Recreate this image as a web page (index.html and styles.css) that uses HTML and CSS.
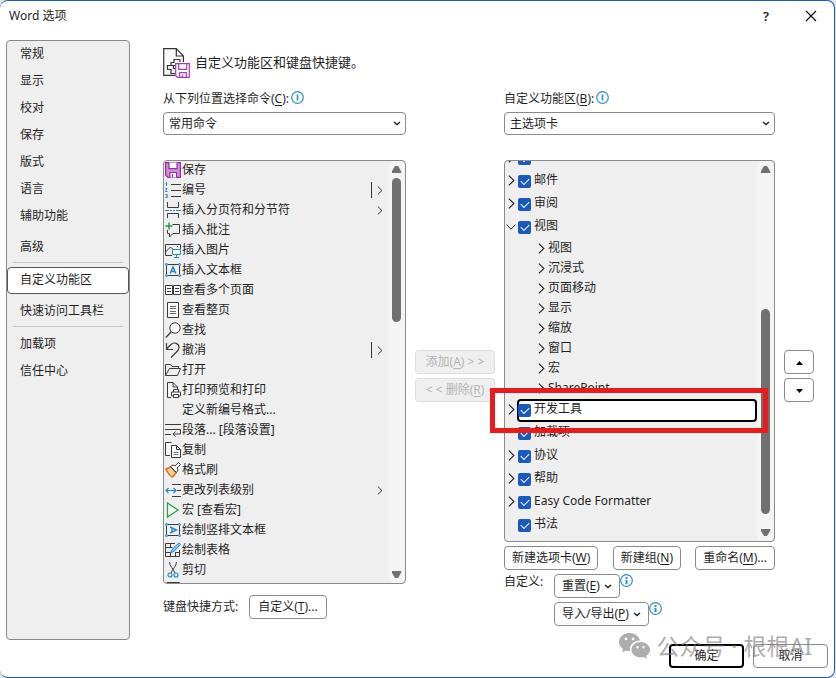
FILE: index.html
```html
<!DOCTYPE html>
<html lang="zh-CN">
<head>
<meta charset="utf-8">
<title>Word 选项</title>
<link rel="stylesheet" href="styles.css">
</head>
<body>
<svg class="defs" aria-hidden="true">
  <symbol id="right" viewBox="0 0 6 10"><path d="M.6.600 5.200 5 .6 9.400"/></symbol>
  <symbol id="down" viewBox="0 0 8 5"><path d="M1 1l3 2.600L7 1"/></symbol>
  <symbol id="info" viewBox="0 0 13 13"><circle cx="6.500" cy="6.500" r="5.800"/><path d="M6.500 3v2M6.500 6v4" stroke-width="2"/></symbol>
  <symbol id="info-bar" viewBox="0 0 13 13"><circle cx="6.500" cy="6.500" r="5.800"/><path d="M6.500 3.500v6" stroke-width="1.600"/></symbol>
</svg>
<div class="dialog">
  <header class="titlebar">
    <h1 class="title">Word 选项</h1>
    <button class="title-btn help" aria-label="帮助">?</button>
    <button class="title-btn" aria-label="关闭"><svg width="12" height="12" viewBox="0 0 12 12"><path d="M1 1l10 10M11 1L1 11" fill="none" stroke="#111" stroke-width="1.200"/></svg></button>
  </header>

  <div class="main">
    <nav class="nav">
      <a href="#">常规</a>
      <a href="#">显示</a>
      <a href="#">校对</a>
      <a href="#">保存</a>
      <a href="#">版式</a>
      <a href="#">语言</a>
      <a href="#">辅助功能</a>
      <a href="#" class="spaced">高级</a>
      <hr>
      <a href="#" class="selected">自定义功能区</a>
      <a href="#" class="spaced">快速访问工具栏</a>
      <hr>
      <a href="#">加载项</a>
      <a href="#">信任中心</a>
    </nav>

    <main class="content">
      <div class="heading">
        <svg width="28" height="30" viewBox="0 0 28 30" fill="none" stroke="#333" stroke-width="1.200"><path d="M12 27.400H.7V.7h12.600L20.400 8v6M13.300.7V8h7.100" fill="#fafafa"/><path d="M17 11.500h-6v3h-3v3M10 17.500H4.500v4H8v4h4M12 17.500h-1.500v3H12M17 11.500V14"/><path d="M12.700 15.700h13.600v13.600h-12l-1.600-1.600z" stroke="#a63bb5" fill="#fff"/><path d="M15.700 15.700v5.600h8v-5.600M16.700 29.300v-4.600h6.600v4.600M19.500 29v-2.500" stroke="#a63bb5"/></svg>
        <h2>自定义功能区和键盘快捷键。</h2>
      </div>

      <div class="columns">
        <section class="col col-commands">
          <div class="label"><label for="source">从下列位置选择命令(<u>C</u>):</label><svg class="info"><use href="#info-bar"/></svg></div>
          <div class="select"><select id="source"><option>常用命令</option></select><svg class="caret"><use href="#down"/></svg></div>
          <div class="listbox">
            <ul class="commands">
              <li><svg class="ico"><path d="M.6.600h14.800v14.800H3L.6 13z" fill="#d48bdb" stroke="#922fa3" stroke-width="1.200"/><path d="M4 .6v6h8v-6M5 15.400V10.500h6.500v4.900" fill="#fff" stroke="#922fa3" stroke-width="1.200"/><path d="M7.500 12v3.400" stroke="#922fa3"/></svg><span>保存</span></li>
              <li><svg class="ico"><path d="M6 2.500h10M6 8.500h10M6 14.500h10"/><path class="blue" d="M.5 1.500h1M1.500 0v4M.3 6.500h1.900M1.800 6.500L.5 9.500h2M.3 12.500h1.900v3H.3M1 14h1"/></svg><span>编号</span><i class="bar"></i><svg class="more"><use href="#right"/></svg></li>
              <li><svg class="ico"><path d="M2.500 0v5.500h11V0M2.500 16v-4.500h11V16"/><path class="blue" d="M0 8.500h4M5 8.500h2M8 8.500h2M11 8.500h5"/></svg><span>插入分页符和分节符</span><svg class="more"><use href="#right"/></svg></li>
              <li><svg class="ico"><path d="M7.500 2.500h7v9H8L4.500 15v-3.500h-2V8"/><path d="M4 .5v7M.5 4h7" stroke="#23944a" stroke-width="1.400"/></svg><span>插入批注</span></li>
              <li><svg class="ico"><path d="M7 13.500H.5v-11h15V7M.5 10l5-5 3 3M12 4.500h1"/><path class="blue" d="M7.500 7.500h8v5h-8zM11.500 12.500v3M9 15.500h5" fill="#fff"/></svg><span>插入图片</span></li>
              <li><svg class="ico"><path d="M3 2.500h10M3 13.500h10M1.500 4v8M14.500 4v8"/><path class="blue" d="M.7 1.700h1.600v1.600H.7zM13.700 1.700h1.600v1.600h-1.600zM.7 12.700h1.600v1.600H.7zM13.700 12.700h1.600v1.600h-1.600z"/><path class="blue" d="M5.200 11.500L8 5l2.800 6.500M6 9.500h4" stroke-width="1.500"/></svg><span>插入文本框</span></li>
              <li><svg class="ico"><path d="M.5 3.500h7v9h-7zM8.500 3.500h7v9h-7z" fill="#fff"/><path d="M2 6.500h4M2 9.500h4M10 6.500h4M10 9.500h4"/></svg><span>查看多个页面</span></li>
              <li><svg class="ico"><path d="M2.500.5h11v15h-11z" fill="#fafafa"/><path d="M5 4.500h6M5 6.500h6M5 9.500h6M5 11.500h6" stroke="#666"/></svg><span>查看整页</span></li>
              <li><svg class="ico"><circle cx="10" cy="6" r="5.200" fill="#fafafa"/><path d="M6.300 9.700L.8 15.500" stroke-width="1.300"/></svg><span>查找</span></li>
              <li><svg class="ico"><path d="M1.500 1v6.500H8M1.500 7L6 2.500c3-3 8-1 8 3 0 2-1 3-2 4L6 15.500" stroke-width="1.200"/></svg><span>撤消</span><i class="bar"></i><svg class="more"><use href="#right"/></svg></li>
              <li><svg class="ico"><path d="M.5 13.500v-11h5l1.500 2h6.500v2M.5 13.500l4-7h11l-3 7z"/></svg><span>打开</span></li>
              <li><svg class="ico"><path d="M6 15.500H2.500V.5H8L12.500 5v2M8 .5V5h4.500" fill="#fafafa"/><path d="M8.500 10V7.500h5V10M8.500 14h-2v-4h9v4h-2M8.500 12.500h5v3h-5z" fill="#fff"/></svg><span>打印预览和打印</span></li>
              <li><svg class="ico"></svg><span>定义新编号格式...</span></li>
              <li><svg class="ico"><path d="M0 2.500h16M0 7.500h15.500v4.500H8M10.500 9.500L8 12l2.500 2.500M0 12.500h6"/></svg><span>段落... [段落设置]</span></li>
              <li><svg class="ico"><path d="M5 13.500H.5V.5h6M6.500 3.500h5l4 4v8h-9zM11.500 3.500v4h4" fill="#fafafa"/><path d="M8.500 10.500h5M8.500 12.500h5" stroke="#777"/></svg><span>复制</span></li>
              <li><svg class="ico"><path d="M1 7l5-2 5 6-3.500 4C5 14 3 11.500 1 7z" fill="#f9d3ae" stroke="#e06c10" stroke-width="1.500"/><path d="M5.500 4.500L8 3l2 1 3.500-3.500 2 2L12 6l1 2-1.500 2.500z" fill="#fff"/></svg><span>格式刷</span></li>
              <li><svg class="ico"><path d="M7 2.500h9M12 8.500h4M7 14.500h9"/><path class="blue" d="M.8 8.500h10M3.500 6L1 8.500 3.500 11M8.500 6L11 8.500 8.500 11" stroke-width="1.200"/></svg><span>更改列表级别</span><svg class="more"><use href="#right"/></svg></li>
              <li><svg class="ico"><path d="M2.500 1v14L13 8z" stroke="#2f9a50" stroke-width="1.300" fill="#f5faf5"/></svg><span>宏 [查看宏]</span></li>
              <li><svg class="ico"><path d="M3 2.500h10M3 13.500h10M1.500 4v8M14.500 4v8"/><path class="blue" d="M.7 1.700h1.600v1.600H.7zM13.700 1.700h1.600v1.600h-1.600zM.7 12.700h1.600v1.600H.7zM13.700 12.700h1.600v1.600h-1.600z"/><path class="blue" d="M5 5l6.500 3L5 11M7 6v4" stroke-width="1.400"/></svg><span>绘制竖排文本框</span></li>
              <li><svg class="ico"><path d="M10 1.500H.5v13h14V8M.5 5.500h7M.5 10.500h5M5.500 1.500v4M5.500 10.500v4M10.500 10v4.500M10 10.500h4"/><path class="blue" d="M6 10.500l1-3L14 .8l1.500 1.500L9 9.500z" fill="#8cc6ee"/></svg><span>绘制表格</span></li>
              <li><svg class="ico"><path d="M4.500 0c0 4 4 7 5.500 11M11.500 0c0 4-4 7-5.500 11"/><circle class="blue" cx="5" cy="13" r="2" stroke-width="1.200"/><circle class="blue" cx="11" cy="13" r="2" stroke-width="1.200"/></svg><span>剪切</span></li>
              <li><svg class="ico"><path d="M2 .5h12.500v12H2z"/></svg></li>
            </ul>
            <div class="scroll"><i class="tri up"></i><div class="track"><i class="thumb thumb-commands"></i></div><i class="tri dn"></i></div>
          </div>
          <div class="shortcut"><span>键盘快捷方式:</span><button class="btn">自定义(<u>T</u>)...</button></div>
        </section>

        <div class="col middle">
          <button class="btn" disabled>添加(<u>A</u>) &gt; &gt;</button>
          <button class="btn" disabled>&lt; &lt; 删除(<u>R</u>)</button>
        </div>

        <section class="col">
          <div class="label"><label for="target">自定义功能区(<u>B</u>):</label><svg class="info"><use href="#info-bar"/></svg></div>
          <div class="select"><select id="target"><option>主选项卡</option></select><svg class="caret"><use href="#down"/></svg></div>
          <div class="tree-wrap">
            <div class="listbox">
              <ul class="tree">
                <li class="tab"><svg class="twist"><use href="#right"/></svg><label><input type="checkbox" checked aria-label="选项卡"></label></li>
                <li class="tab"><svg class="twist"><use href="#right"/></svg><label><input type="checkbox" checked><span>邮件</span></label></li>
                <li class="tab"><svg class="twist"><use href="#right"/></svg><label><input type="checkbox" checked><span>审阅</span></label></li>
                <li class="tab"><svg class="twist open" viewBox="0 0 10 6"><path d="M.6.600L5 5.200 9.400.6"/></svg><label><input type="checkbox" checked><span>视图</span></label></li>
                <li class="group"><svg class="twist"><use href="#right"/></svg><span>视图</span></li>
                <li class="group"><svg class="twist"><use href="#right"/></svg><span>沉浸式</span></li>
                <li class="group"><svg class="twist"><use href="#right"/></svg><span>页面移动</span></li>
                <li class="group"><svg class="twist"><use href="#right"/></svg><span>显示</span></li>
                <li class="group"><svg class="twist"><use href="#right"/></svg><span>缩放</span></li>
                <li class="group"><svg class="twist"><use href="#right"/></svg><span>窗口</span></li>
                <li class="group"><svg class="twist"><use href="#right"/></svg><span>宏</span></li>
                <li class="group"><svg class="twist"><use href="#right"/></svg><span>SharePoint</span></li>
                <li class="tab"><svg class="twist"><use href="#right"/></svg><label class="focused"><input type="checkbox" checked><span>开发工具</span></label></li>
                <li class="tab"><i class="twist"></i><label><input type="checkbox" checked><span>加载项</span></label></li>
                <li class="tab"><svg class="twist"><use href="#right"/></svg><label><input type="checkbox" checked><span>协议</span></label></li>
                <li class="tab"><svg class="twist"><use href="#right"/></svg><label><input type="checkbox" checked><span>帮助</span></label></li>
                <li class="tab"><svg class="twist"><use href="#right"/></svg><label><input type="checkbox" checked><span>Easy Code Formatter</span></label></li>
                <li class="tab"><i class="twist"></i><label><input type="checkbox" checked><span>书法</span></label></li>
              </ul>
              <div class="scroll"><i class="tri up"></i><div class="track track-tabs"><i class="thumb thumb-tabs"></i></div><i class="tri dn"></i></div>
            </div>
            <div class="callout"></div>
          </div>
          <div class="tree-actions">
            <button class="btn">新建选项卡(<u>W</u>)</button>
            <button class="btn">新建组(<u>N</u>)</button>
            <button class="btn">重命名(<u>M</u>)...</button>
          </div>
          <div class="custom">
            <span class="custom-label">自定义:</span>
            <div class="custom-row"><button class="btn">重置(<u>E</u>)<svg class="caret"><use href="#down"/></svg></button><svg class="info"><use href="#info"/></svg></div>
            <div class="custom-row second"><button class="btn">导入/导出(<u>P</u>)<svg class="caret"><use href="#down"/></svg></button><svg class="info"><use href="#info"/></svg></div>
          </div>
        </section>

        <div class="col middle">
          <button class="btn" aria-label="上移"><svg width="7" height="4"><path d="M0 4l3.500-4L7 4z"/></svg></button>
          <button class="btn" aria-label="下移"><svg width="7" height="4"><path d="M0 0l3.500 4L7 0z"/></svg></button>
        </div>
      </div>
    </main>
  </div>

  <footer class="footer">
    <button class="btn default">确定</button>
    <button class="btn">取消</button>
  </footer>
  <div class="watermark">
    <svg width="31" height="27" viewBox="0 0 31 27"><path fill="#777" fill-rule="evenodd" d="M10.500 0C4.500 0 0 4 0 9c0 3 1.500 5.300 4 7l-1 3.500 4-2c1.300.4 2.500.5 4 .5C10 12 15 7.500 21 7.500 20 3 15.500 0 10.500 0zM7 4.500a1.400 1.400 0 110 2.800 1.400 1.400 0 010-2.800zm7 0a1.400 1.400 0 110 2.800 1.400 1.400 0 010-2.800z"/><path fill="#777" fill-rule="evenodd" d="M21.500 9c-5 0-9 3.500-9 7.800s4 7.700 9 7.700c1 0 2-.2 3-.5l3.500 2-1-3c2.400-1.500 4-3.700 4-6.200 0-4.300-4.500-7.800-9.500-7.800zm-3 4a1.200 1.200 0 110 2.400 1.200 1.200 0 010-2.400zm6 0a1.200 1.200 0 110 2.400 1.200 1.200 0 010-2.400z"/></svg>
    <span>公众号 · 根根AI</span>
  </div>
</div>
</body>
</html>
```
FILE: styles.css
```css
* { box-sizing: border-box; }

body {
  margin: 0;
  background: #e6e6e6;
  color: #1f1f1f;
  font: 12px/16px "Noto Sans", "Noto Sans CJK SC", sans-serif;
}

button, select { font: inherit; color: inherit; }
ul { list-style: none; margin: 0; padding: 0; }
u { text-underline-offset: 2px; }
svg { flex: none; }
use, .open { fill: none; stroke: #222; }
.defs { position: absolute; width: 0; height: 0; }

.dialog {
  position: relative;
  display: flex;
  flex-direction: column;
  height: 100vh;
  min-height: 600px;
  margin-right: 1px;
  background: #fff;
  border: 1px solid #1a5bb8;
  border-left-width: 0;
  border-radius: 8px;
}

.titlebar { display: flex; align-items: center; height: 39px; padding: 0 11px 10px 9px; }
.title { flex: 1; margin: 0; font-size: 12px; font-weight: 400; }
.title-btn { display: grid; place-items: center; width: 24px; height: 24px; padding: 0; border: 0; background: none; }
.title-btn + .title-btn { margin-left: 21px; }
.help { font-size: 13px; font-weight: 600; }

.main { display: flex; flex: 1; min-height: 0; }

.nav {
  flex: none;
  width: 124px;
  margin-left: 6px;
  border: 1px solid #8a8a8a;
  border-radius: 4px;
  background: #efefef;
}
.nav a {
  display: block;
  height: 27px;
  padding: 5px 13px 0;
  color: inherit;
  text-decoration: none;
}
.nav .spaced { margin-top: 3px; padding-top: 6px; }
.nav .selected {
  padding: 4px 12px 0;
  border: 1px solid #555;
  border-radius: 4px;
  background: #fff;
}
.nav hr { height: 1px; margin: 2px 6px 4px; border: 0; background: #c8c8c8; }

.content {
  display: flex;
  flex-direction: column;
  flex: 1;
  min-width: 0;
  padding: 8px 20px 14px 33px;
}
.heading { display: flex; gap: 4px; height: 30px; margin-bottom: 12px; }
.heading h2 { margin: 6px 0 0; font-size: 13px; font-weight: 400; }

.columns {
  display: grid;
  grid-template-columns: minmax(0, 243fr) 80px minmax(0, 271fr) 30px;
  grid-template-rows: minmax(0, 1fr);
  gap: 9px;
  flex: 1;
  min-height: 0;
}
.col { display: flex; flex-direction: column; min-height: 0; }
.col-commands { padding-bottom: 7px; }

.label { display: flex; gap: 2px; }
.label label { padding-top: 1px; }
.info { width: 13px; height: 13px; margin-top: 1px; }
.info use { stroke: #2a8fd0; stroke-width: 1.2; }

.select { display: grid; align-items: center; margin: 5px 0 25px; }
.select > * { grid-area: 1 / 1; }
.select select {
  width: 100%;
  height: 23px;
  padding: 0 5px;
  border: 1px solid #8a8a8a;
  border-radius: 4px;
  background: #fff;
  appearance: none;
}
.caret { width: 8px; height: 5px; }
.select .caret { justify-self: end; margin-right: 5px; pointer-events: none; }
.caret use { stroke-width: 1.4; }

.listbox {
  display: flex;
  flex: 1;
  min-height: 0;
  overflow: hidden;
  border: 1px solid #8a8a8a;
  border-radius: 4px;
  background: #efefef;
}
.commands, .tree { flex: 1; min-width: 0; }
.commands li {
  display: flex;
  align-items: center;
  gap: 1px;
  height: 20px;
  padding: 0 5px 2px 1px;
  white-space: nowrap;
}
.commands span { flex: 1; }
.ico { width: 16px; height: 16px; fill: none; stroke: #3a3a3a; overflow: hidden; }
.ico .blue { stroke: #1f8ad0; }
.bar { width: 1px; height: 16px; margin-right: 4px; background: #333; }
.more { width: 6px; height: 9px; }

.scroll {
  display: flex;
  flex-direction: column;
  align-items: center;
  width: 17px;
  padding: 5px 0;
  background: #f4f4f4;
  border-radius: 6px;
}
.tri { width: 10px; height: 7px; background: #707070; }
.up { clip-path: polygon(35% 0, 65% 0, 100% 85%, 95% 100%, 5% 100%, 0 85%); }
.dn { clip-path: polygon(35% 100%, 65% 100%, 100% 15%, 95% 0, 5% 0, 0 15%); }
.track { flex: 1; width: 9px; margin: 5px 0; }
.thumb { display: block; border-radius: 5px; background: #707070; }
.thumb-commands { height: 37%; }
.track-tabs { display: flex; align-items: flex-end; padding-bottom: 10px; }
.thumb-tabs { width: 9px; height: 61%; }

.shortcut { display: flex; align-items: center; gap: 11px; margin-top: 11px; }

.btn {
  height: 24px;
  padding: 0 7px;
  border: 1px solid #8a8a8a;
  border-radius: 4px;
  background: #fff;
  white-space: nowrap;
}
.shortcut .btn { padding: 0 8px; }
.btn .caret { margin-left: 4px; vertical-align: 1px; }
.middle { justify-content: center; gap: 4px; padding-top: 36px; }
.middle .btn { padding: 0; }
.middle svg { vertical-align: middle; }
.btn:disabled { border-color: #dedede; background: #efefef; color: #b4b4b4; }

.tree-wrap { position: relative; display: flex; flex: 1; min-height: 0; }
.tree { margin-top: -16px; }
.tab, .group { display: flex; align-items: flex-start; }
.tab { height: 23px; padding-left: 3px; }
.tab .twist { width: 7px; height: 11px; margin: 7px 2px 0 0; }
.tab .open { width: 10px; height: 6px; margin: 10px 0 0 -2px; }
.tab .open + label { margin-left: 1px; }
.tab label {
  display: flex;
  flex: 1;
  align-items: center;
  gap: 3px;
  height: 23px;
  margin-top: 2px;
  padding-left: 1px;
}
.tab label span { padding-bottom: 4px; }
.tab .focused {
  padding: 0;
  border: 2px solid #000;
  border-radius: 4px;
  background: #fff;
}
.tab input {
  display: grid;
  place-items: center;
  width: 13px;
  height: 13px;
  margin: 0;
  border-radius: 2px;
  background: #185abd;
  appearance: none;
}
.tab .focused input { margin-left: -1px; }
.tab input::after {
  width: 7px;
  height: 4px;
  margin-top: -2px;
  border: solid #fff;
  border-width: 0 0 1px 1px;
  transform: rotate(-45deg);
  content: "";
}
.group { height: 20px; padding: 3px 0 0 33px; gap: 3px; }
.group .twist { width: 7px; height: 11px; margin-top: 3px; }

.callout {
  position: absolute;
  top: 228px;
  right: 7px;
  left: -14px;
  height: 45px;
  border: 5px solid #e81c1c;
  pointer-events: none;
}

.tree-actions { display: flex; justify-content: space-between; margin: 4px 0; }
.custom { display: grid; grid-template-columns: 50px 1fr; gap: 4px 0; }
.custom-row { display: flex; }
.custom-row .info { margin-top: 0; }
.second { grid-column: 2; }

.footer { display: flex; justify-content: flex-end; gap: 9px; padding: 4px 6px 9px; }
.footer .btn { width: 75px; }
.footer .default { border: 2px solid #000; }

.watermark {
  position: absolute;
  right: 22px;
  bottom: 16px;
  display: flex;
  align-items: center;
  gap: 6px;
  color: #777;
  font-size: 23px;
  line-height: 30px;
  opacity: .6;
  pointer-events: none;
}
```
